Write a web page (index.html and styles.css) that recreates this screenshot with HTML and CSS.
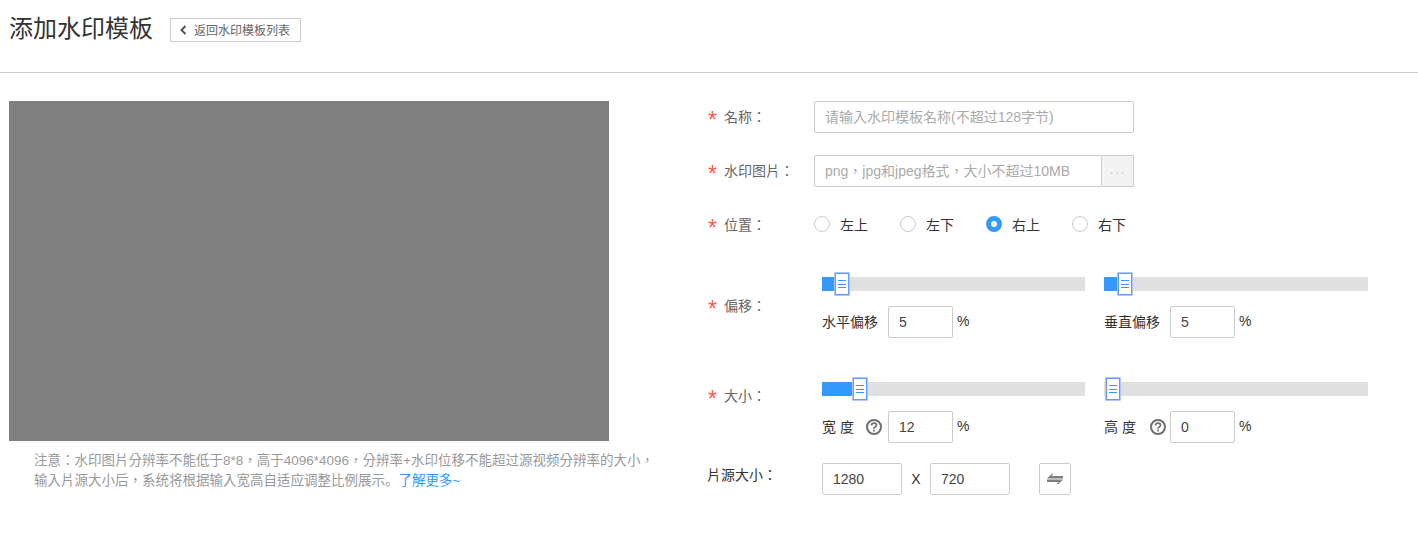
FILE: index.html
```html
<!DOCTYPE html>
<html lang="zh-CN">
<head>
    <meta charset="UTF-8">
    <meta name="viewport" content="width=device-width, initial-scale=1.0">
    <title>添加水印模板</title>
    <link rel="stylesheet" href="styles.css">
</head>
<body>
    <header class="head">
        <h1 class="title">添加水印模板</h1>
        <a class="back" href="#">
            <svg class="back-icon" width="7" height="10" viewBox="0 0 7 10"><path d="M5.500 1 1.500 5l4 4" fill="none" stroke="#555" stroke-width="2"/></svg>
            返回水印模板列表
        </a>
    </header>
    <main class="main">
        <section class="left">
            <div class="preview"></div>
            <p class="note" lang="zh-Hant">注意：水印图片分辨率不能低于8*8，高于4096*4096，分辨率+水印位移不能超过源视频分辨率的大小，输入片源大小后，系统将根据输入宽高自适应调整比例展示<span class="stop" lang="zh-CN">。</span><a href="#">了解更多~</a></p>
        </section>
        <form class="form">
            <div class="row">
                <label class="label" lang="zh-Hant"><span class="star">*</span>名称：</label>
                <input class="input input-name" lang="zh-Hant" type="text" placeholder="请输入水印模板名称(不超过128字节)">
            </div>
            <div class="row">
                <label class="label" lang="zh-Hant"><span class="star">*</span>水印图片：</label>
                <div class="file">
                    <input class="input input-file" lang="zh-Hant" type="text" placeholder="png，jpg和jpeg格式，大小不超过10MB">
                    <span class="browse">···</span>
                </div>
            </div>
            <div class="row">
                <label class="label" lang="zh-Hant"><span class="star">*</span>位置：</label>
                <div class="radios">
                    <span class="radio"><i class="dot"></i>左上</span>
                    <span class="radio"><i class="dot"></i>左下</span>
                    <span class="radio"><i class="dot dot-on"></i>右上</span>
                    <span class="radio"><i class="dot"></i>右下</span>
                </div>
            </div>
            <div class="row row-offset">
                <label class="label label-offset" lang="zh-Hant"><span class="star">*</span>偏移：</label>
                <div class="pair">
                    <div>
                        <div class="slider"><div class="fill" style="width:13px"></div><div class="thumb" style="left:12px"><i></i></div></div>
                        <div class="field"><span class="field-name">水平偏移</span><input class="input input-small" type="text" value="5"><span class="unit">%</span></div>
                    </div>
                    <div>
                        <div class="slider"><div class="fill" style="width:13px"></div><div class="thumb" style="left:13px"><i></i></div></div>
                        <div class="field"><span class="field-name">垂直偏移</span><input class="input input-small" type="text" value="5"><span class="unit">%</span></div>
                    </div>
                </div>
            </div>
            <div class="row row-size">
                <label class="label label-size" lang="zh-Hant"><span class="star">*</span>大小：</label>
                <div class="pair">
                    <div>
                        <div class="slider"><div class="fill" style="width:30px"></div><div class="thumb" style="left:30px"><i></i></div></div>
                        <div class="field">
                            <span class="field-name field-short">宽 度</span>
                            <svg class="help" width="16" height="16" viewBox="0 0 16 16"><circle cx="8" cy="8" r="7" fill="none" stroke="#6f6f6f" stroke-width="2"/><path d="M5.500 6.400C5.500 5 6.600 4.100 8 4.100s2.500.9 2.500 2.200c0 1.900-2.500 1.600-2.500 3.500" fill="none" stroke="#6f6f6f" stroke-width="1.700"/><rect x="7.100" y="10.700" width="1.800" height="1.800" fill="#6f6f6f"/></svg>
                            <input class="input input-small" type="text" value="12"><span class="unit">%</span>
                        </div>
                    </div>
                    <div>
                        <div class="slider"><div class="thumb" style="left:1px"><i></i></div></div>
                        <div class="field">
                            <span class="field-name field-short field-shorter">高 度</span>
                            <svg class="help help-near" width="16" height="16" viewBox="0 0 16 16"><circle cx="8" cy="8" r="7" fill="none" stroke="#6f6f6f" stroke-width="2"/><path d="M5.500 6.400C5.500 5 6.600 4.100 8 4.100s2.500.9 2.500 2.200c0 1.900-2.500 1.600-2.500 3.500" fill="none" stroke="#6f6f6f" stroke-width="1.700"/><rect x="7.100" y="10.700" width="1.800" height="1.800" fill="#6f6f6f"/></svg>
                            <input class="input input-small" type="text" value="0"><span class="unit">%</span>
                        </div>
                    </div>
                </div>
            </div>
            <div class="row row-source">
                <label class="label label-source" lang="zh-Hant">片源大小：</label>
                <div class="source">
                    <input class="input input-source" type="text" value="1280">
                    <span class="times">X</span>
                    <input class="input input-source" type="text" value="720">
                    <button class="swap" type="button">
                        <svg width="16" height="12" viewBox="0 0 16 12"><path d="M0 5.500 5 .5 6.200 1.700 4 3H16v2.500zM16 6.500l-5 5-1.200-1.200L12 9H0V6.500z" fill="#7f7f7f"/></svg>
                    </button>
                </div>
            </div>
        </form>
    </main>
</body>
</html>
```

FILE: styles.css
```css
* {
    box-sizing: border-box;
}

body {
    margin: 0;
    background: white;
    color: #333;
    font-family: "Liberation Sans", "Noto Sans CJK SC", sans-serif;
    font-size: 14px;
}

.head {
    display: flex;
    align-items: center;
    height: 73px;
    padding: 0 0 13px 9px;
    border-bottom: 1px solid #ccc;
}

.title {
    margin: 0 17px 2px 0;
    font-size: 24px;
    font-weight: normal;
    line-height: 32px;
}

.back {
    display: flex;
    align-items: center;
    width: 131px;
    height: 24px;
    padding-left: 9px;
    border: 1px solid #ccc;
    color: #666;
    font-size: 12px;
    text-decoration: none;
}

.back-icon {
    margin-right: 7px;
}

.main {
    display: flex;
    padding: 28px 0 0 9px;
}

.left {
    width: 699px;
    flex: none;
}

.preview {
    width: 600px;
    height: 340px;
    background: #808080;
}

.note {
    width: 622px;
    margin: 10px 0 0 25px;
    color: #999;
    font-family: "Liberation Sans", "Noto Sans CJK TC", sans-serif;
    font-size: 13.5px;
    line-height: 20px;
}

.stop {
    font-family: "Noto Sans CJK SC", sans-serif;
    line-height: 1;
}

.note a {
    color: #3399ff;
    text-decoration: none;
}

.form {
    flex: 1;
}

.row {
    display: flex;
    align-items: center;
    min-height: 32px;
    margin-bottom: 22px;
}

.row-offset,
.row-size,
.row-source {
    align-items: flex-start;
}

.row-offset {
    margin-top: 31px;
    margin-bottom: 39px;
}

.row-size {
    margin-bottom: 20px;
}

.label {
    display: flex;
    align-items: center;
    width: 106px;
    flex: none;
    color: #666;
    font-family: "Liberation Sans", "Noto Sans CJK TC", sans-serif;
    line-height: 20px;
}

.label-offset {
    margin-top: 24px;
}

.label-size {
    margin-top: 9px;
}

.label-source {
    margin-top: 2px;
    margin-left: -1px;
    margin-right: 1px;
    color: #333;
}

.star {
    width: 16px;
    height: 20px;
    color: #ff5a50;
    font-size: 23px;
    line-height: 26px;
}

.input {
    height: 32px;
    padding: 0 10px;
    border: 1px solid #ccc;
    border-radius: 2px;
    outline: none;
    color: #444;
    font-family: inherit;
    font-size: 14px;
}

.input::placeholder {
    color: #aaa;
    font-family: "Liberation Sans", "Noto Sans CJK TC", sans-serif;
}

.input-name {
    width: 320px;
}

.file {
    display: flex;
    width: 320px;
}

.input-file {
    width: 288px;
}

.browse {
    width: 32px;
    height: 32px;
    background: #f3f3f3;
    border: 1px solid #ccc;
    border-left: 0;
    color: #ccc;
    letter-spacing: 1px;
    text-align: center;
    line-height: 32px;
}

.radios {
    display: flex;
    margin-top: -2px;
}

.radio {
    display: flex;
    align-items: center;
    width: 86px;
}

.dot {
    width: 16px;
    height: 16px;
    margin-right: 10px;
    border: 1px solid #ccc;
    border-radius: 50%;
}

.dot-on {
    border: 5px solid #3399ff;
}

.pair {
    display: grid;
    grid-template-columns: 263px 264px;
    column-gap: 19px;
    margin-left: 8px;
}

.slider {
    position: relative;
    height: 14px;
    margin-top: 5px;
    background: #e0e0e0;
}

.fill {
    height: 14px;
    background: #3399ff;
}

.thumb {
    position: absolute;
    top: -5px;
    width: 16px;
    height: 24px;
    background: white;
    border: 1px solid #b4c4ff;
    border-radius: 1px;
    box-shadow: 0 0 0 1px #5c9dff inset;
}

.thumb i {
    position: absolute;
    top: 7px;
    left: 3px;
    width: 8px;
    height: 8px;
    border-top: 1px solid #3399ff;
    border-bottom: 1px solid #3399ff;
    background: linear-gradient(#3399ff, #3399ff) center / 100% 1px no-repeat;
}

.field {
    display: flex;
    align-items: center;
    margin-top: 15px;
}

.field-name {
    width: 66px;
    padding-bottom: 2px;
    flex: none;
}

.field-short {
    width: 44px;
}

.field-shorter {
    width: 46px;
}

.help {
    width: 16px;
    margin-right: 6px;
    flex: none;
}

.help-near {
    margin-right: 4px;
}

.input-small {
    width: 65px;
}

.unit {
    margin-left: 4px;
    padding-bottom: 2px;
}

.source {
    display: flex;
    align-items: center;
    margin-left: 8px;
}

.input-source {
    width: 80px;
}

.times {
    width: 28px;
    text-align: center;
}

.swap {
    display: flex;
    align-items: center;
    justify-content: center;
    width: 32px;
    height: 32px;
    margin-left: 29px;
    padding: 0;
    background: white;
    border: 1px solid #ccc;
    border-radius: 2px;
}
```
